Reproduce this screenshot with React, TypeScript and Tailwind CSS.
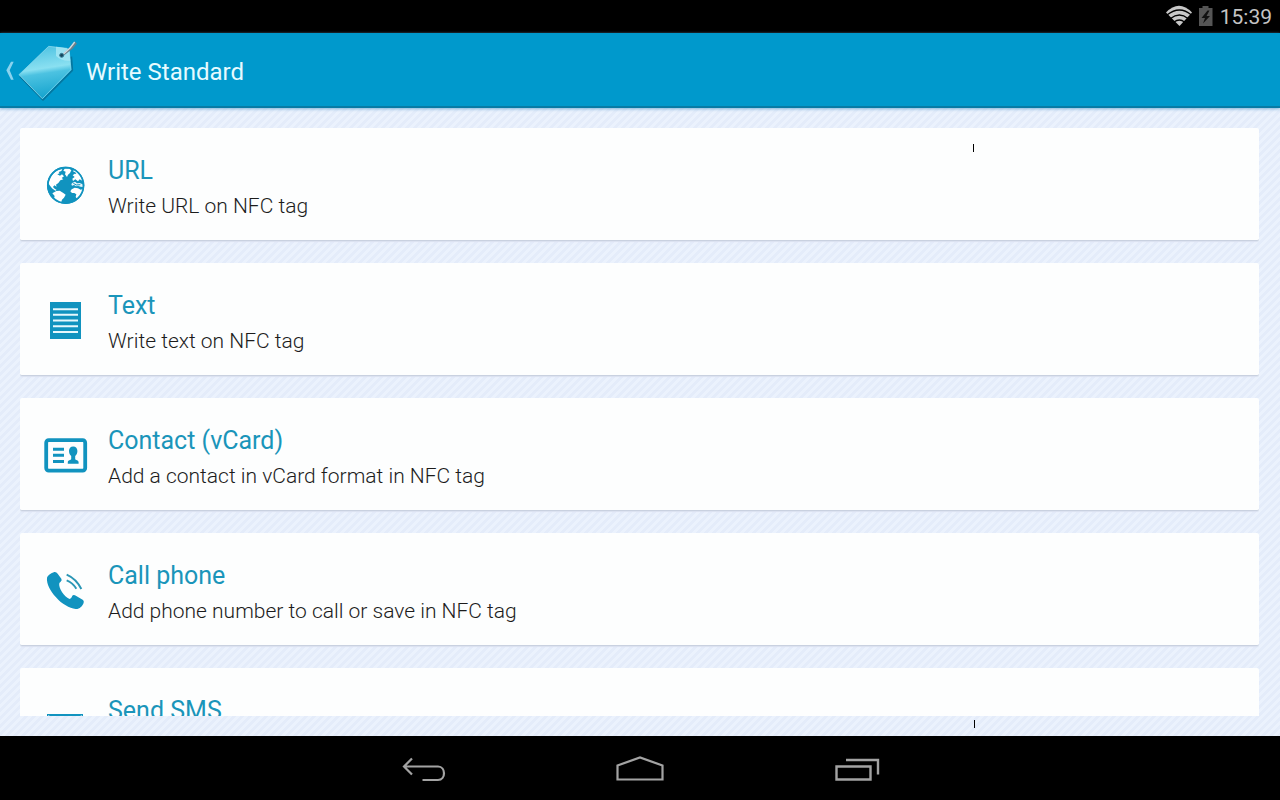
import type { ReactNode } from "react";

type Action = {
  id: string;
  title: string;
  description: string;
  icon: ReactNode;
};

const GlobeIcon = () => (
  <svg viewBox="0 0 44 44" className="size-11 shrink-0" aria-hidden="true">
    <g transform="translate(0 2) scale(.3333)">
      <circle cx="65" cy="64" r="56" fill="#1193bf" />
      <g fill="#fff">
        <path d="M16 50C21 35 30 25 42 19L55 15L52 21L44 24L47 28L40 31L48 35L54 31L60 37L53 42L58 46L49 49L43 57L36 62L38 68L31 64L27 69L32 74L38 78L34 80L24 73L17 64L14 59Z" />
        <path d="M37 81L47 80L58 87L65 92L60 101L54 107L51 116C43 113 36 109 30 103L32 96L25 88Z" />
        <path d="M62 14L76 14L82 19L78 27L72 32L69 39L63 31L65 23L58 20Z" />
        <path d="M90 18C102 25 111 36 115 50L107 46L102 52L94 46L87 51L85 44L92 39L86 34L92 29L97 30L94 25L87 22Z" />
        <path d="M86 56L93 53L99 58L107 57L116 61L117 69L110 68L103 66L96 67L90 63L84 65L82 60Z" opacity=".9" />
        <path d="M83 76L92 71L102 73L110 77L117 75C115 86 109 97 100 105L95 99L97 91L91 87L84 87L79 82Z" />
      </g>
      <path d="M88 58l9 5l12-1" fill="none" stroke="#1193bf" strokeWidth="3" />
      <circle cx="65" cy="64" r="53.5" fill="none" stroke="#1193bf" strokeWidth="5" />
    </g>
  </svg>
);

const TextIcon = () => (
  <svg viewBox="0 0 44 44" className="size-11 shrink-0" aria-hidden="true">
    <path d="M6 5h31v37H6z" fill="#1193bf" />
    <path d="M9 12.2h25M9 17.7h25M9 23.5h25M9 29.3h25M9 35h25" stroke="#e6f8fd" strokeWidth="1.9" />
  </svg>
);

const ContactIcon = () => (
  <svg viewBox="0 0 44 44" className="size-11 shrink-0" aria-hidden="true">
    <rect x="2.2" y="8.2" width="39" height="30.4" rx="2.5" fill="none" stroke="#1193bf" strokeWidth="3.8" />
    <path d="M9 17.2h11M9 23.3h11M9 29.6h11" stroke="#1193bf" strokeWidth="3" />
    <path
      d="M29.2 14.4c2.7 0 4.2 1.9 4.2 4.6 0 2.2-.9 4-2.2 5v3c.3 1.2 3.4 1.2 3.4 3.2v1.5H23.8v-1.5c0-2 3.1-2 3.4-3.2v-3c-1.3-1-2.2-2.8-2.2-5 0-2.7 1.5-4.6 4.2-4.6z"
      fill="#1193bf"
    />
  </svg>
);

const PhoneIcon = () => (
  <svg viewBox="0 0 44 44" className="size-11 shrink-0" aria-hidden="true">
    <g transform="translate(-24 -17) scale(.3333)">
      <path
        d="M103 66Q109 65 113 71L124 86Q127 91 122 95L118 99C114 114 134 142 149 147Q153 146 155 142L157 137Q160 133 165 136L188 149Q193 152 191 158C188 168 178 178 167 177C148 174 126 163 108 142C91 123 79 101 81 83Q83 74 103 66Z"
        fill="#1193bf"
      />
      <path d="M140 74Q168 86 184 117M140 91Q158 98 169 116" fill="none" stroke="#2a96b5" strokeWidth="6" />
    </g>
  </svg>
);

const MessageIcon = () => (
  <svg viewBox="0 0 44 44" className="size-11 shrink-0" aria-hidden="true">
    <path d="M3 12h36v24H3z" fill="#1193bf" />
    <path d="M4 14l17 13 17-13" fill="none" stroke="#fff" strokeWidth="2" />
  </svg>
);

const actions: Action[] = [
  { id: "url", title: "URL", description: "Write URL on NFC tag", icon: <GlobeIcon /> },
  { id: "text", title: "Text", description: "Write text on NFC tag", icon: <TextIcon /> },
  {
    id: "contact",
    title: "Contact (vCard)",
    description: "Add a contact in vCard format in NFC tag",
    icon: <ContactIcon />,
  },
  {
    id: "call",
    title: "Call phone",
    description: "Add phone number to call or save in NFC tag",
    icon: <PhoneIcon />,
  },
  { id: "sms", title: "Send SMS", description: "", icon: <MessageIcon /> },
];

function StatusBar() {
  return (
    <div className="flex h-[33px] shrink-0 items-center justify-end bg-black pr-2 text-[#c4c4c4]">
      <svg viewBox="0 0 54 33" className="h-[33px] w-[54px]" aria-hidden="true">
        <path d="M0 12.5Q13-1 26 12.5L13.5 26z" fill="#c8c8c8" />
        <path
          d="M1 15Q13.5 5 25.5 15M4.5 18.5Q13.5 11.5 22 18.5M8 22Q13.5 18 18.5 22"
          fill="none"
          stroke="#000"
          strokeWidth="1.3"
        />
        <path d="M36.5 6h6v2H46.5v18H33V8h3.5z" fill="#555" />
        <path d="M41.5 10.5l-6 7.5h3.5l-2 5.5 7-7.5h-3.5l3-5.500z" fill="#111" />
      </svg>
      <time className="pt-0.5 text-[21px] leading-[31px]">15:39</time>
    </div>
  );
}

function ActionBar() {
  return (
    <header className="relative z-10 flex h-[75px] shrink-0 items-center border-b-2 border-[#087ba5] bg-[#0099cc] shadow-[0_1px_3px_#7fb4d8]">
      <a href="#" className="flex items-center gap-1.5">
        <svg viewBox="0 0 80 75" className="h-[75px] w-20" aria-hidden="true">
          <defs>
            <linearGradient id="tagFill" x1=".4" y1="0" x2=".55" y2="1">
              <stop offset="0" stopColor="#4fc3e2" />
              <stop offset=".42" stopColor="#8ae0f1" />
              <stop offset=".52" stopColor="#4cc2e1" />
              <stop offset="1" stopColor="#12a2cd" />
            </linearGradient>
          </defs>
          <g transform="translate(0 -2) scale(.3333)" fill="none" strokeLinejoin="round">
            <path d="M41 95H33L19 121L33 149H41L29 121Z" fill="#8ad3ee" />
            <path d="M60 139L129 210L217 121L214 80" stroke="#07668a" strokeWidth="5" opacity=".7" />
            <path d="M146 49L200 55Q207 57 208 65L213 119L127 206L57 134Z" fill="url(#tagFill)" stroke="#9adff0" strokeWidth="2" />
            <path d="M168 50L200 55Q207 57 208 65L211 92Q184 94 168 78Z" fill="#a9e9f5" opacity=".8" />
            <path d="M188 76L207 58L226 36M191 74L215 55L229 39" stroke="#6d7f89" strokeWidth="5" />
            <path d="M188 74L210 54L224 36" stroke="#cfdce2" strokeWidth="4" />
            <circle cx="185" cy="76" r="6" fill="#17485d" stroke="#37819b" strokeWidth="3" />
          </g>
        </svg>
        <h1 className="pt-1 text-2xl text-[#e6fbff]">Write Standard</h1>
      </a>
    </header>
  );
}

function ActionCard({ action }: { action: Action }) {
  return (
    <li>
      <button
        type="button"
        className="flex h-[113px] w-full items-center gap-5 rounded-[2px] border-b border-[#c9d1e0] bg-[#fdfefe] px-6 text-left shadow-[0_1px_1px_#dbe2f0]"
      >
        {action.icon}
        <span className="flex flex-col pt-2">
          <span className="text-[25px] leading-9 text-[#1a95ba]">{action.title}</span>
          <span className="min-h-[34px] text-[21px] leading-[34px] font-light text-[#1c1c1c]">
            {action.description}
          </span>
        </span>
      </button>
    </li>
  );
}

function NavigationBar() {
  return (
    <nav className="flex h-16 shrink-0 justify-center bg-black pt-0.5 text-[#a3a3a3]">
      <button type="button" aria-label="Back" className="flex w-[216px] items-center justify-center">
        <svg viewBox="0 0 48 32" className="h-8 w-12" fill="none" stroke="currentColor" strokeWidth="2.2" aria-hidden="true">
          <path d="M12 5.5L4 13.5L12 21.500M4 13.500H38C46 13.500 46 27 38 27H22.500" />
        </svg>
      </button>
      <button type="button" aria-label="Home" className="flex w-[216px] items-center justify-center">
        <svg viewBox="0 0 48 32" className="h-8 w-12" fill="none" stroke="currentColor" strokeWidth="2.2" aria-hidden="true">
          <path d="M1.500 26.500V12.500L24 4.500L46.500 12.500V26.500z" />
        </svg>
      </button>
      <button type="button" aria-label="Recent apps" className="flex w-[216px] items-center justify-center">
        <svg viewBox="0 0 48 32" className="h-8 w-12" fill="none" stroke="currentColor" strokeWidth="2.4" aria-hidden="true">
          <path d="M4.500 13.500H38.500V26.500H4.500zM14 7H46V21.500" />
        </svg>
      </button>
    </nav>
  );
}

export default function App() {
  return (
    <div className="flex h-screen flex-col overflow-hidden font-[Roboto,sans-serif]">
      <StatusBar />
      <ActionBar />
      <main className="relative min-h-0 flex-1 bg-[#e8effc] bg-[linear-gradient(135deg,#e4ecfa_25%,#ebf2fd_25%_50%,#e4ecfa_50%_75%,#ebf2fd_75%)] bg-size-[8px_8px] py-5 pr-[21px] pl-5">
        <ul className="flex h-full flex-col gap-[22px] overflow-hidden">
          {actions.map((action) => (
            <ActionCard key={action.id} action={action} />
          ))}
        </ul>
        <span className="absolute top-9 left-[76%] h-2 w-px bg-black" />
        <span className="absolute bottom-2 left-[76.1%] h-2 w-px bg-black" />
      </main>
      <NavigationBar />
    </div>
  );
}
